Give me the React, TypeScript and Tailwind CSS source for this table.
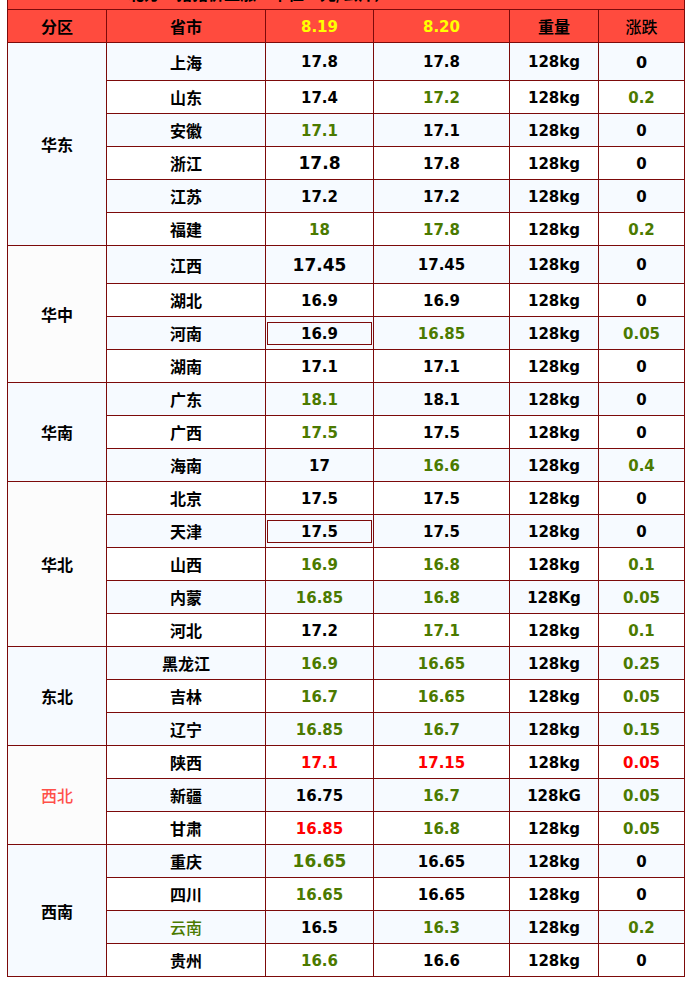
import React from 'react';

type Tone = 'k' | 'g' | 'r';

interface Row {
  city: string;
  cityTone?: Tone;
  a: string;
  aTone: Tone;
  aBig?: boolean;
  aBox?: boolean;
  b: string;
  bTone: Tone;
  w?: string;
  c: string;
  cTone: Tone;
  cBig?: boolean;
  tall?: boolean;
}

interface Group {
  name: string;
  red?: boolean;
  rows: Row[];
}

const groups: Group[] = [
  {
    name: '华东',
    rows: [
      { city: '上海', a: '17.8', aTone: 'k', b: '17.8', bTone: 'k', c: '0', cTone: 'k', cBig: true, tall: true },
      { city: '山东', a: '17.4', aTone: 'k', b: '17.2', bTone: 'g', c: '0.2', cTone: 'g' },
      { city: '安徽', a: '17.1', aTone: 'g', b: '17.1', bTone: 'k', c: '0', cTone: 'k' },
      { city: '浙江', a: '17.8', aTone: 'k', aBig: true, b: '17.8', bTone: 'k', c: '0', cTone: 'k' },
      { city: '江苏', a: '17.2', aTone: 'k', b: '17.2', bTone: 'k', c: '0', cTone: 'k' },
      { city: '福建', a: '18', aTone: 'g', b: '17.8', bTone: 'g', c: '0.2', cTone: 'g' },
    ],
  },
  {
    name: '华中',
    rows: [
      { city: '江西', a: '17.45', aTone: 'k', aBig: true, b: '17.45', bTone: 'k', c: '0', cTone: 'k', tall: true },
      { city: '湖北', a: '16.9', aTone: 'k', b: '16.9', bTone: 'k', c: '0', cTone: 'k' },
      { city: '河南', a: '16.9', aTone: 'k', aBox: true, b: '16.85', bTone: 'g', c: '0.05', cTone: 'g' },
      { city: '湖南', a: '17.1', aTone: 'k', b: '17.1', bTone: 'k', c: '0', cTone: 'k' },
    ],
  },
  {
    name: '华南',
    rows: [
      { city: '广东', a: '18.1', aTone: 'g', b: '18.1', bTone: 'k', c: '0', cTone: 'k' },
      { city: '广西', a: '17.5', aTone: 'g', b: '17.5', bTone: 'k', c: '0', cTone: 'k' },
      { city: '海南', a: '17', aTone: 'k', b: '16.6', bTone: 'g', c: '0.4', cTone: 'g' },
    ],
  },
  {
    name: '华北',
    rows: [
      { city: '北京', a: '17.5', aTone: 'k', b: '17.5', bTone: 'k', c: '0', cTone: 'k' },
      { city: '天津', a: '17.5', aTone: 'k', aBox: true, b: '17.5', bTone: 'k', c: '0', cTone: 'k' },
      { city: '山西', a: '16.9', aTone: 'g', b: '16.8', bTone: 'g', c: '0.1', cTone: 'g' },
      { city: '内蒙', a: '16.85', aTone: 'g', b: '16.8', bTone: 'g', w: '128Kg', c: '0.05', cTone: 'g' },
      { city: '河北', a: '17.2', aTone: 'k', b: '17.1', bTone: 'g', c: '0.1', cTone: 'g' },
    ],
  },
  {
    name: '东北',
    rows: [
      { city: '黑龙江', a: '16.9', aTone: 'g', b: '16.65', bTone: 'g', c: '0.25', cTone: 'g' },
      { city: '吉林', a: '16.7', aTone: 'g', b: '16.65', bTone: 'g', c: '0.05', cTone: 'g' },
      { city: '辽宁', a: '16.85', aTone: 'g', b: '16.7', bTone: 'g', c: '0.15', cTone: 'g' },
    ],
  },
  {
    name: '西北',
    red: true,
    rows: [
      { city: '陕西', a: '17.1', aTone: 'r', b: '17.15', bTone: 'r', c: '0.05', cTone: 'r' },
      { city: '新疆', a: '16.75', aTone: 'k', b: '16.7', bTone: 'g', w: '128kG', c: '0.05', cTone: 'g' },
      { city: '甘肃', a: '16.85', aTone: 'r', b: '16.8', bTone: 'g', c: '0.05', cTone: 'g' },
    ],
  },
  {
    name: '西南',
    rows: [
      { city: '重庆', a: '16.65', aTone: 'g', aBig: true, b: '16.65', bTone: 'k', c: '0', cTone: 'k' },
      { city: '四川', a: '16.65', aTone: 'g', b: '16.65', bTone: 'k', c: '0', cTone: 'k' },
      { city: '云南', cityTone: 'g', a: '16.5', aTone: 'k', b: '16.3', bTone: 'g', c: '0.2', cTone: 'g' },
      { city: '贵州', a: '16.6', aTone: 'g', b: '16.6', bTone: 'k', c: '0', cTone: 'k' },
    ],
  },
];

const tone = (t: Tone) =>
  t === 'g' ? 'text-[#4b7a00]' : t === 'r' ? 'text-[#ff0000]' : 'text-black';

const cell = 'border border-[#7c0a0a] text-center align-middle p-0';
const num = 'pt-[2px]';

export default function App() {
  let idx = 0;

  return (
    <div className="bg-white w-[691px] h-[983px] overflow-hidden font-['DejaVu_Sans','Noto_Sans_CJK_SC',sans-serif]">
      <table className="ml-[7px] mt-[-24px] w-[677px] table-fixed border-collapse">
        <colgroup>
          <col className="w-[99px]" />
          <col className="w-[159px]" />
          <col className="w-[108px]" />
          <col className="w-[136px]" />
          <col className="w-[89px]" />
          <col className="w-[86px]" />
        </colgroup>
        <tbody>
          {/* title row, mostly scrolled out of view */}
          <tr className="h-[33px] bg-[#ff4b3e]">
            <td colSpan={6} className={`${cell} text-[16px] font-bold text-black font-['Noto_Sans_CJK_SC',sans-serif]`}>
              <div className="pl-[120px] text-left">北方一猪猪价上涨　单位：元/公斤）</div>
            </td>
          </tr>
          <tr className="h-[33px] bg-[#ff4b3e] text-[16px] font-bold">
            <td className={`${cell} font-['Noto_Sans_CJK_SC',sans-serif] text-black`}>分区</td>
            <td className={`${cell} font-['Noto_Sans_CJK_SC',sans-serif] text-black`}>省市</td>
            <td className={`${cell} ${num} text-[15px] text-[#ffff00]`}>8.19</td>
            <td className={`${cell} ${num} text-[15px] text-[#ffff00]`}>8.20</td>
            <td className={`${cell} font-['Noto_Sans_CJK_SC',sans-serif] text-black`}>重量</td>
            <td className={`${cell} font-['Noto_Sans_CJK_SC',sans-serif] font-medium text-black`}>涨跌</td>
          </tr>
          {groups.map((g, gi) =>
            g.rows.map((r, ri) => {
              const bg = idx++ % 2 === 0 ? 'bg-[#f6faff]' : 'bg-white';
              return (
                <tr key={r.city} className={`${r.tall ? 'h-[38px]' : 'h-[33px]'} ${bg} text-[15px] font-bold`}>
                  {ri === 0 && (
                    <td
                      rowSpan={g.rows.length}
                      className={`${cell} ${gi % 2 === 0 ? 'bg-[#f6faff]' : 'bg-[#fcfcfc]'} text-[16px] font-['Noto_Sans_CJK_SC',sans-serif] ${
                        g.red ? 'text-[#ff5049] font-medium' : 'text-black'
                      }`}
                    >
                      {g.name}
                    </td>
                  )}
                  <td
                    className={`${cell} text-[16px] font-['Noto_Sans_CJK_SC',sans-serif] ${
                      r.cityTone ? `${tone(r.cityTone)} font-medium` : 'text-black'
                    }`}
                  >
                    {r.city}
                  </td>
                  <td className={`${cell} ${r.aBox ? '' : num} ${tone(r.aTone)} ${r.aBig ? 'text-[17px]' : ''}`}>
                    {r.aBox ? (
                      <div className="mx-px h-[23px] border border-[#7c0a0a] pt-px leading-[21px]">{r.a}</div>
                    ) : (
                      r.a
                    )}
                  </td>
                  <td className={`${cell} ${num} ${tone(r.bTone)}`}>{r.b}</td>
                  <td className={`${cell} ${num} text-black`}>{r.w ?? '128kg'}</td>
                  <td className={`${cell} ${num} ${tone(r.cTone)} ${r.cBig ? 'text-[16px] font-extrabold' : ''}`}>{r.c}</td>
                </tr>
              );
            })
          )}
        </tbody>
      </table>
    </div>
  );
}
